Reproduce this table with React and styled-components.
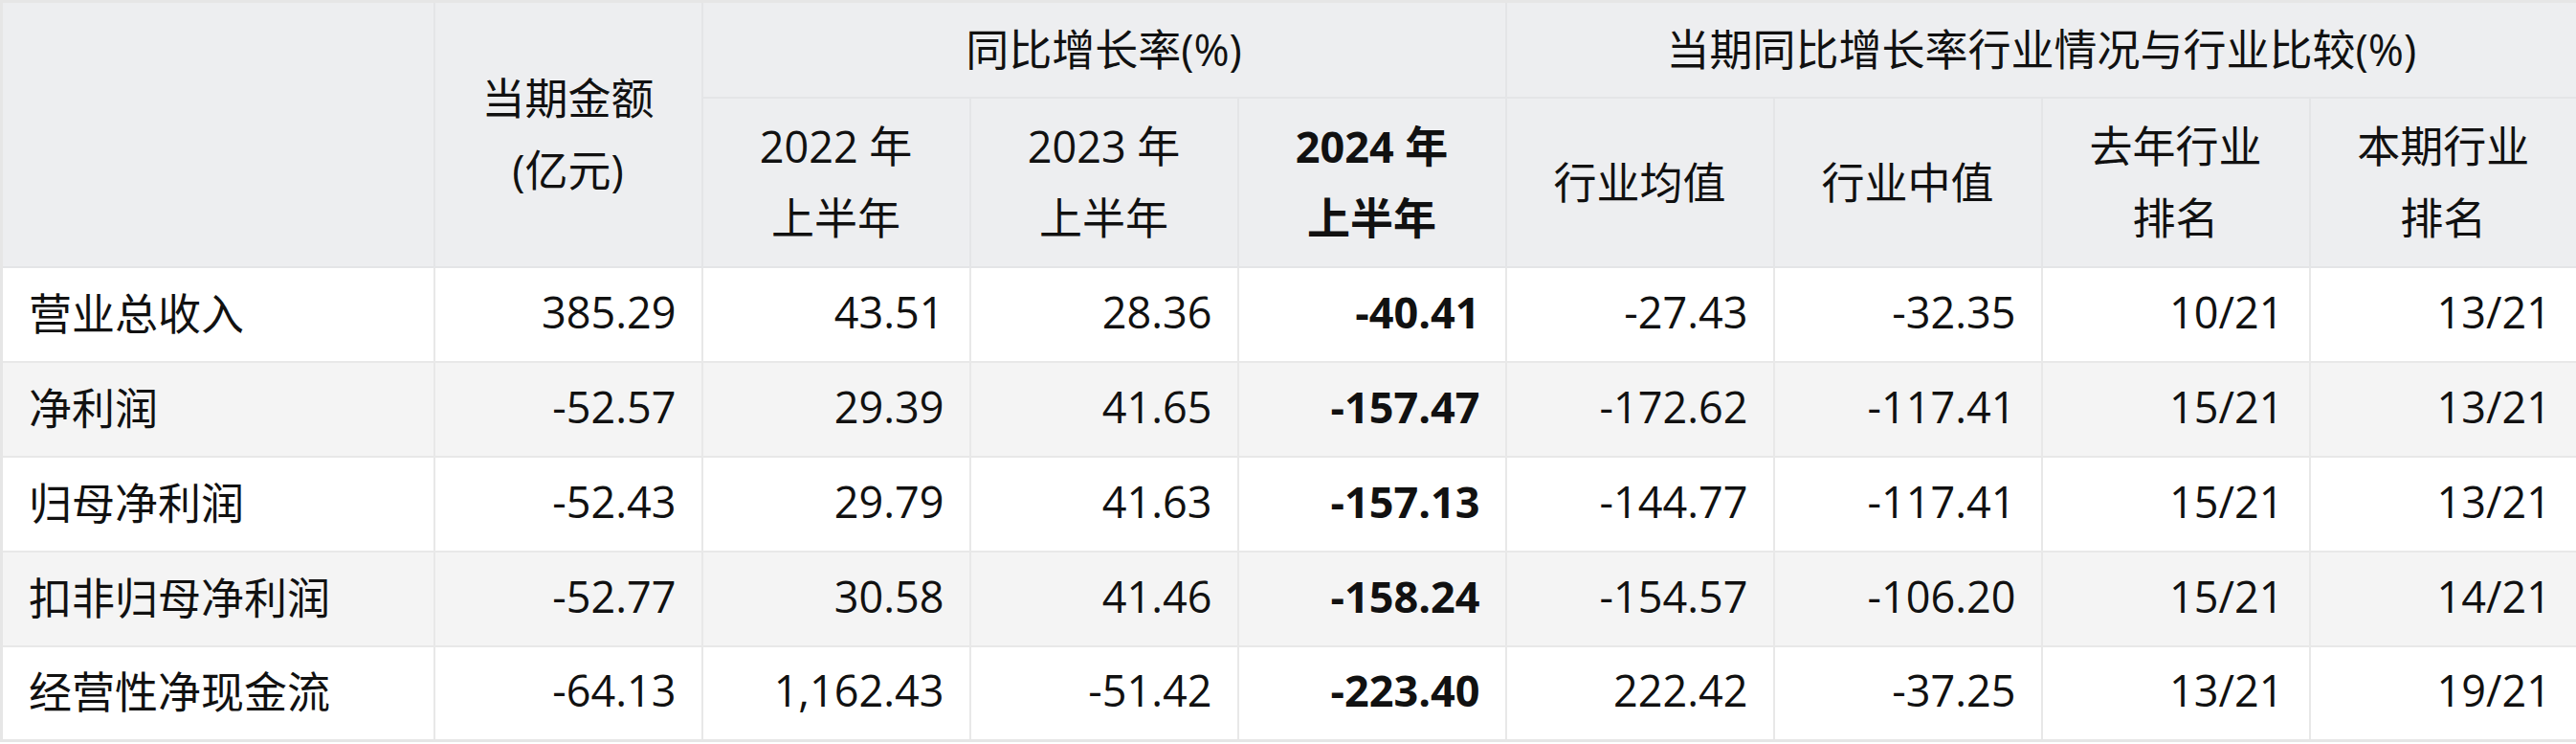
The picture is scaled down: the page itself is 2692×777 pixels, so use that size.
import React from 'react';
import styled, { createGlobalStyle } from 'styled-components';

const GlobalStyle = createGlobalStyle`
  html, body {
    margin: 0;
    padding: 0;
    background: #ffffff;
  }
  body {
    font-family: "Open Sans", "Noto Sans CJK SC", sans-serif;
    color: #111111;
  }
`;

const rows = [
  { name: '营业总收入', amount: '385.29', y22: '43.51', y23: '28.36', y24: '-40.41', avg: '-27.43', mid: '-32.35', last: '10/21', now: '13/21' },
  { name: '净利润', amount: '-52.57', y22: '29.39', y23: '41.65', y24: '-157.47', avg: '-172.62', mid: '-117.41', last: '15/21', now: '13/21' },
  { name: '归母净利润', amount: '-52.43', y22: '29.79', y23: '41.63', y24: '-157.13', avg: '-144.77', mid: '-117.41', last: '15/21', now: '13/21' },
  { name: '扣非归母净利润', amount: '-52.77', y22: '30.58', y23: '41.46', y24: '-158.24', avg: '-154.57', mid: '-106.20', last: '15/21', now: '14/21' },
  { name: '经营性净现金流', amount: '-64.13', y22: '1,162.43', y23: '-51.42', y24: '-223.40', avg: '222.42', mid: '-37.25', last: '13/21', now: '19/21' },
];

const App = () => {
  return (
    <>
      <GlobalStyle />
      <Table>
        <colgroup>
          <col style={{ width: 452 }} />
          {Array.from({ length: 8 }).map((_, i) => (
            <col key={i} style={{ width: 280 }} />
          ))}
        </colgroup>
        <thead>
          <TopRow>
            <HeadCell rowSpan={2} />
            <HeadCell rowSpan={2}>当期金额<br />(亿元)</HeadCell>
            <HeadCell colSpan={3}>同比增长率(%)</HeadCell>
            <HeadCell colSpan={4}>当期同比增长率行业情况与行业比较(%)</HeadCell>
          </TopRow>
          <SubRow>
            <HeadCell>2022 年<br />上半年</HeadCell>
            <HeadCell>2023 年<br />上半年</HeadCell>
            <HeadCell $bold>2024 年<br />上半年</HeadCell>
            <HeadCell>行业均值</HeadCell>
            <HeadCell>行业中值</HeadCell>
            <HeadCell>去年行业<br />排名</HeadCell>
            <HeadCell>本期行业<br />排名</HeadCell>
          </SubRow>
        </thead>
        <tbody>
          {rows.map((r, i) => (
            <BodyRow key={r.name} $alt={i % 2 === 1}>
              <NameCell>{r.name}</NameCell>
              <NumCell>{r.amount}</NumCell>
              <NumCell>{r.y22}</NumCell>
              <NumCell>{r.y23}</NumCell>
              <NumCell $bold>{r.y24}</NumCell>
              <NumCell>{r.avg}</NumCell>
              <NumCell>{r.mid}</NumCell>
              <NumCell>{r.last}</NumCell>
              <NumCell>{r.now}</NumCell>
            </BodyRow>
          ))}
        </tbody>
      </Table>
    </>
  );
};

const Table = styled.table`
  width: 2692px;
  table-layout: fixed;
  border-collapse: collapse;
  border: 3px solid #e6e6e6;
  font-size: 45px;
`;

const TopRow = styled.tr`
  height: 100px;
`;

const SubRow = styled.tr`
  height: 177px;
`;

const HeadCell = styled.th`
  background: #edeef0;
  border: 2px solid #e4e5e7;
  font-weight: ${p => (p.$bold ? 700 : 400)};
  text-align: center;
  vertical-align: middle;
  line-height: 75px;
  padding: 0;
  color: #111111;
`;

const BodyRow = styled.tr`
  height: 99px;
  background: ${p => (p.$alt ? '#f4f4f4' : '#ffffff')};
`;

const NameCell = styled.td`
  border: 2px solid #e8e8e8;
  padding: 0 0 6px 27px;
  text-align: left;
  vertical-align: middle;
  white-space: nowrap;
`;

const NumCell = styled.td`
  border: 2px solid #e8e8e8;
  padding: 0 26px 6px 0;
  text-align: right;
  vertical-align: middle;
  white-space: nowrap;
  font-weight: ${p => (p.$bold ? 700 : 400)};
`;

export default App;
